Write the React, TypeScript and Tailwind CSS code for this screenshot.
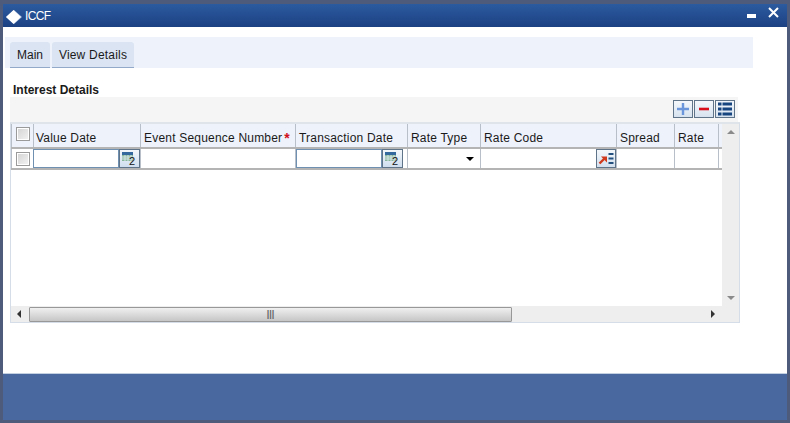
import React from "react";

const font = { fontFamily: '"Liberation Sans", Arial, sans-serif' };

function CalendarButton() {
  return (
    <button className="flex h-[19px] w-[21px] shrink-0 items-center justify-center border border-[#5f7488] bg-gradient-to-b from-[#f3f7fb] to-[#cfdeee]">
      <svg width="17" height="17" viewBox="0 0 17 17">
        <rect x="1" y="2" width="11" height="3" fill="#33699c" />
        <rect x="1" y="5" width="11" height="6" fill="#86b59c" />
        <path d="M1 7h11M1 9h11M4 5v6M7 5v6M10 5v6" stroke="#d5e6e6" strokeWidth="1" />
        <text x="8" y="15" fontSize="11" fill="#111" fontFamily="Liberation Sans">2</text>
      </svg>
    </button>
  );
}

function LookupButton() {
  return (
    <button className="flex h-[19px] w-[20px] shrink-0 items-center justify-center border border-[#5f7488] bg-gradient-to-b from-[#f3f7fb] to-[#d3e0ee]">
      <svg width="16" height="13" viewBox="0 0 16 13">
        <path d="M1.5 11.5 L6.5 6.5" stroke="#d0391c" strokeWidth="2.4" fill="none" />
        <path d="M3 4.5h6v6z" fill="#d0391c" />
        <path d="M10.5 2h5M10.5 6.5h5M10.5 11h5" stroke="#24507f" strokeWidth="2" />
      </svg>
    </button>
  );
}

function Check() {
  return <span className="block h-[14px] w-[14px] border border-[#9a9a9a] bg-gradient-to-br from-[#d2d2d2] to-[#f4f4f4] shadow-[inset_0_0_0_1px_#fff]" />;
}

const toolBtn = "flex h-[18px] w-[20px] items-center justify-center border border-[#5f7488] bg-gradient-to-b from-[#f4f8fc] to-[#d6e2ef]";

const headers = [
  { label: "Value Date", w: "w-[107px] pl-[2px]" },
  { label: "Event Sequence Number", w: "w-[155px] pl-[3px]", req: true },
  { label: "Transaction Date", w: "w-[112px] pl-[3px]" },
  { label: "Rate Type", w: "w-[73px] pl-[3px]" },
  { label: "Rate Code", w: "w-[136px] pl-[3px]" },
  { label: "Spread", w: "w-[58px] pl-[3px]" },
  { label: "Rate", w: "w-[44px] pl-[3px]" },
];

export default function App() {
  return (
    <div style={font} className="flex h-[423px] w-[790px] flex-col overflow-hidden border-x-[3px] border-t-[4px] border-b-[3px] border-[#4f5b7b] bg-white text-[12px] text-[#1a1a1a]">
      {/* titlebar */}
      <div className="flex h-[23px] shrink-0 items-center bg-gradient-to-b from-[#2c5b9f] to-[#1c4183] pl-[3px] text-white">
        <svg width="16" height="14" viewBox="0 0 16 14" className="mt-[3px] shrink-0">
          <path d="M8 0 L16 7 L8 14 L0 7 Z" fill="#9db4d6" />
          <path d="M7.5 0 L15 7 L7.5 14 L0 7 Z" fill="#fff" />
        </svg>
        <span className="ml-[3px] mt-[1px] flex-1 text-[12px] tracking-[-0.6px]">ICCF</span>
        <span className="mr-[12px] block h-[4px] w-[9px] bg-white" />
        <svg width="11" height="11" viewBox="0 0 11 11" className="mb-[6px] mr-[8px]">
          <path d="M1 1 L10 10 M10 1 L1 10" stroke="#fff" strokeWidth="2" />
        </svg>
      </div>

      <div className="flex flex-1 flex-col border-b border-[#c3d0e2] pl-[2px]">
        {/* tabs */}
        <div className="mt-[10px] flex h-[31px] w-[748px] items-end gap-[2px] bg-[#eef3fb] pl-[5px]">
          <div className="flex h-[26px] w-[40px] items-center justify-center rounded-t-[3px] border-b border-[#93a9c9] bg-[#dbe4f2]">Main</div>
          <div className="flex h-[26px] w-[82px] items-center justify-center rounded-t-[3px] border-b border-[#93a9c9] bg-[#dbe4f2] tracking-[0.2px]">View Details</div>
        </div>

        <div className="ml-[8px] mt-[14px] h-[15px] font-bold leading-[17px]">Interest Details</div>

        {/* toolbar */}
        <div className="ml-[5px] flex h-[25px] w-[728px] items-start justify-end gap-[1px] bg-[#f5f5f5] pr-[3px] pt-[3px]">
          <button className={toolBtn}>
            <svg width="14" height="14" viewBox="0 0 14 14"><path d="M7 1v12M1 7h12" stroke="#6b96dc" strokeWidth="2.4" /></svg>
          </button>
          <button className={toolBtn}>
            <svg width="14" height="14" viewBox="0 0 14 14"><path d="M2 7h10" stroke="#d9101c" strokeWidth="2.6" /></svg>
          </button>
          <button className={toolBtn}>
            <svg width="16" height="14" viewBox="0 0 16 14">
              <path d="M1 2h3.5M5.5 2H15M1 7h3.5M5.5 7H15M1 12h3.5M5.5 12H15" stroke="#17457f" strokeWidth="3" />
            </svg>
          </button>
        </div>

        {/* grid */}
        <div className="ml-[5px] flex h-[201px] w-[730px] flex-col border border-t-2 border-[#d5dde8] border-t-[#dfe4ea]">
          <div className="flex flex-1 min-h-0">
            <div className="flex-1 min-w-0 overflow-hidden">
              <div className="flex h-[25px] border-b-2 border-[#b4b4b4] bg-[#eef2fb]">
                <div className="flex w-[23px] shrink-0 items-start justify-center border-x border-[#b8bfc8] pt-[3px]"><Check /></div>
                {headers.map((h) => (
                  <div key={h.label} className={`${h.w} flex shrink-0 items-center border-r border-[#b8bfc8] pt-[5px] tracking-[0.2px]`}>
                    {h.label}
                    {h.req && <span className="ml-[2px] text-[14px] font-bold leading-none text-[#d0101a]">*</span>}
                  </div>
                ))}
              </div>
              <div className="flex h-[21px] border-b-2 border-[#b4b4b4]">
                <div className="flex w-[23px] shrink-0 items-center justify-center border-x border-[#b8bfc8]"><Check /></div>
                <div className="flex w-[107px] shrink-0 items-center border-r border-[#b8bfc8]">
                  <span className="-ml-px h-[19px] w-[86px] border border-[#6f90b0] bg-white" />
                  <CalendarButton />
                </div>
                <div className="w-[155px] shrink-0 border-r border-[#b8bfc8]" />
                <div className="flex w-[112px] shrink-0 items-center border-r border-[#b8bfc8]">
                  <span className="h-[19px] w-[86px] border border-[#6f90b0] bg-white" />
                  <CalendarButton />
                </div>
                <div className="flex w-[73px] shrink-0 items-center justify-end border-r border-[#b8bfc8] pr-[6px]">
                  <span className="mt-[1px] h-0 w-0 border-x-[4px] border-t-[4px] border-x-transparent border-t-black" />
                </div>
                <div className="flex w-[136px] shrink-0 items-center justify-end border-r border-[#b8bfc8]"><LookupButton /></div>
                <div className="w-[58px] shrink-0 border-r border-[#b8bfc8]" />
                <div className="w-[44px] shrink-0 border-r border-[#b8bfc8]" />
              </div>
            </div>
            {/* vertical scrollbar */}
            <div className="flex w-[17px] shrink-0 flex-col items-center justify-between bg-[#eeeeee] py-[6px]">
              <span className="h-0 w-0 border-x-[4px] border-b-[4px] border-x-transparent border-b-[#8a8a8a]" />
              <span className="h-0 w-0 border-x-[4px] border-t-[4px] border-x-transparent border-t-[#8a8a8a]" />
            </div>
          </div>
          {/* horizontal scrollbar */}
          <div className="flex h-[16px] shrink-0 items-center bg-[#eeeeee]">
            <span className="ml-[6px] h-0 w-0 border-y-[4px] border-r-[4px] border-y-transparent border-r-[#333]" />
            <div className="ml-[8px] flex h-[15px] w-[483px] items-center justify-center rounded-[1px] border border-[#989898] bg-gradient-to-b from-[#f0f0f0] to-[#c6c6c6]">
              <span className="text-[9px] font-bold leading-none text-[#666]">|||</span>
            </div>
            <span className="ml-[199px] h-0 w-0 border-y-[4px] border-l-[4px] border-y-transparent border-l-[#333]" />
          </div>
        </div>
      </div>

      <div className="h-[46px] shrink-0 bg-[#4a68a0]" />
    </div>
  );
}
